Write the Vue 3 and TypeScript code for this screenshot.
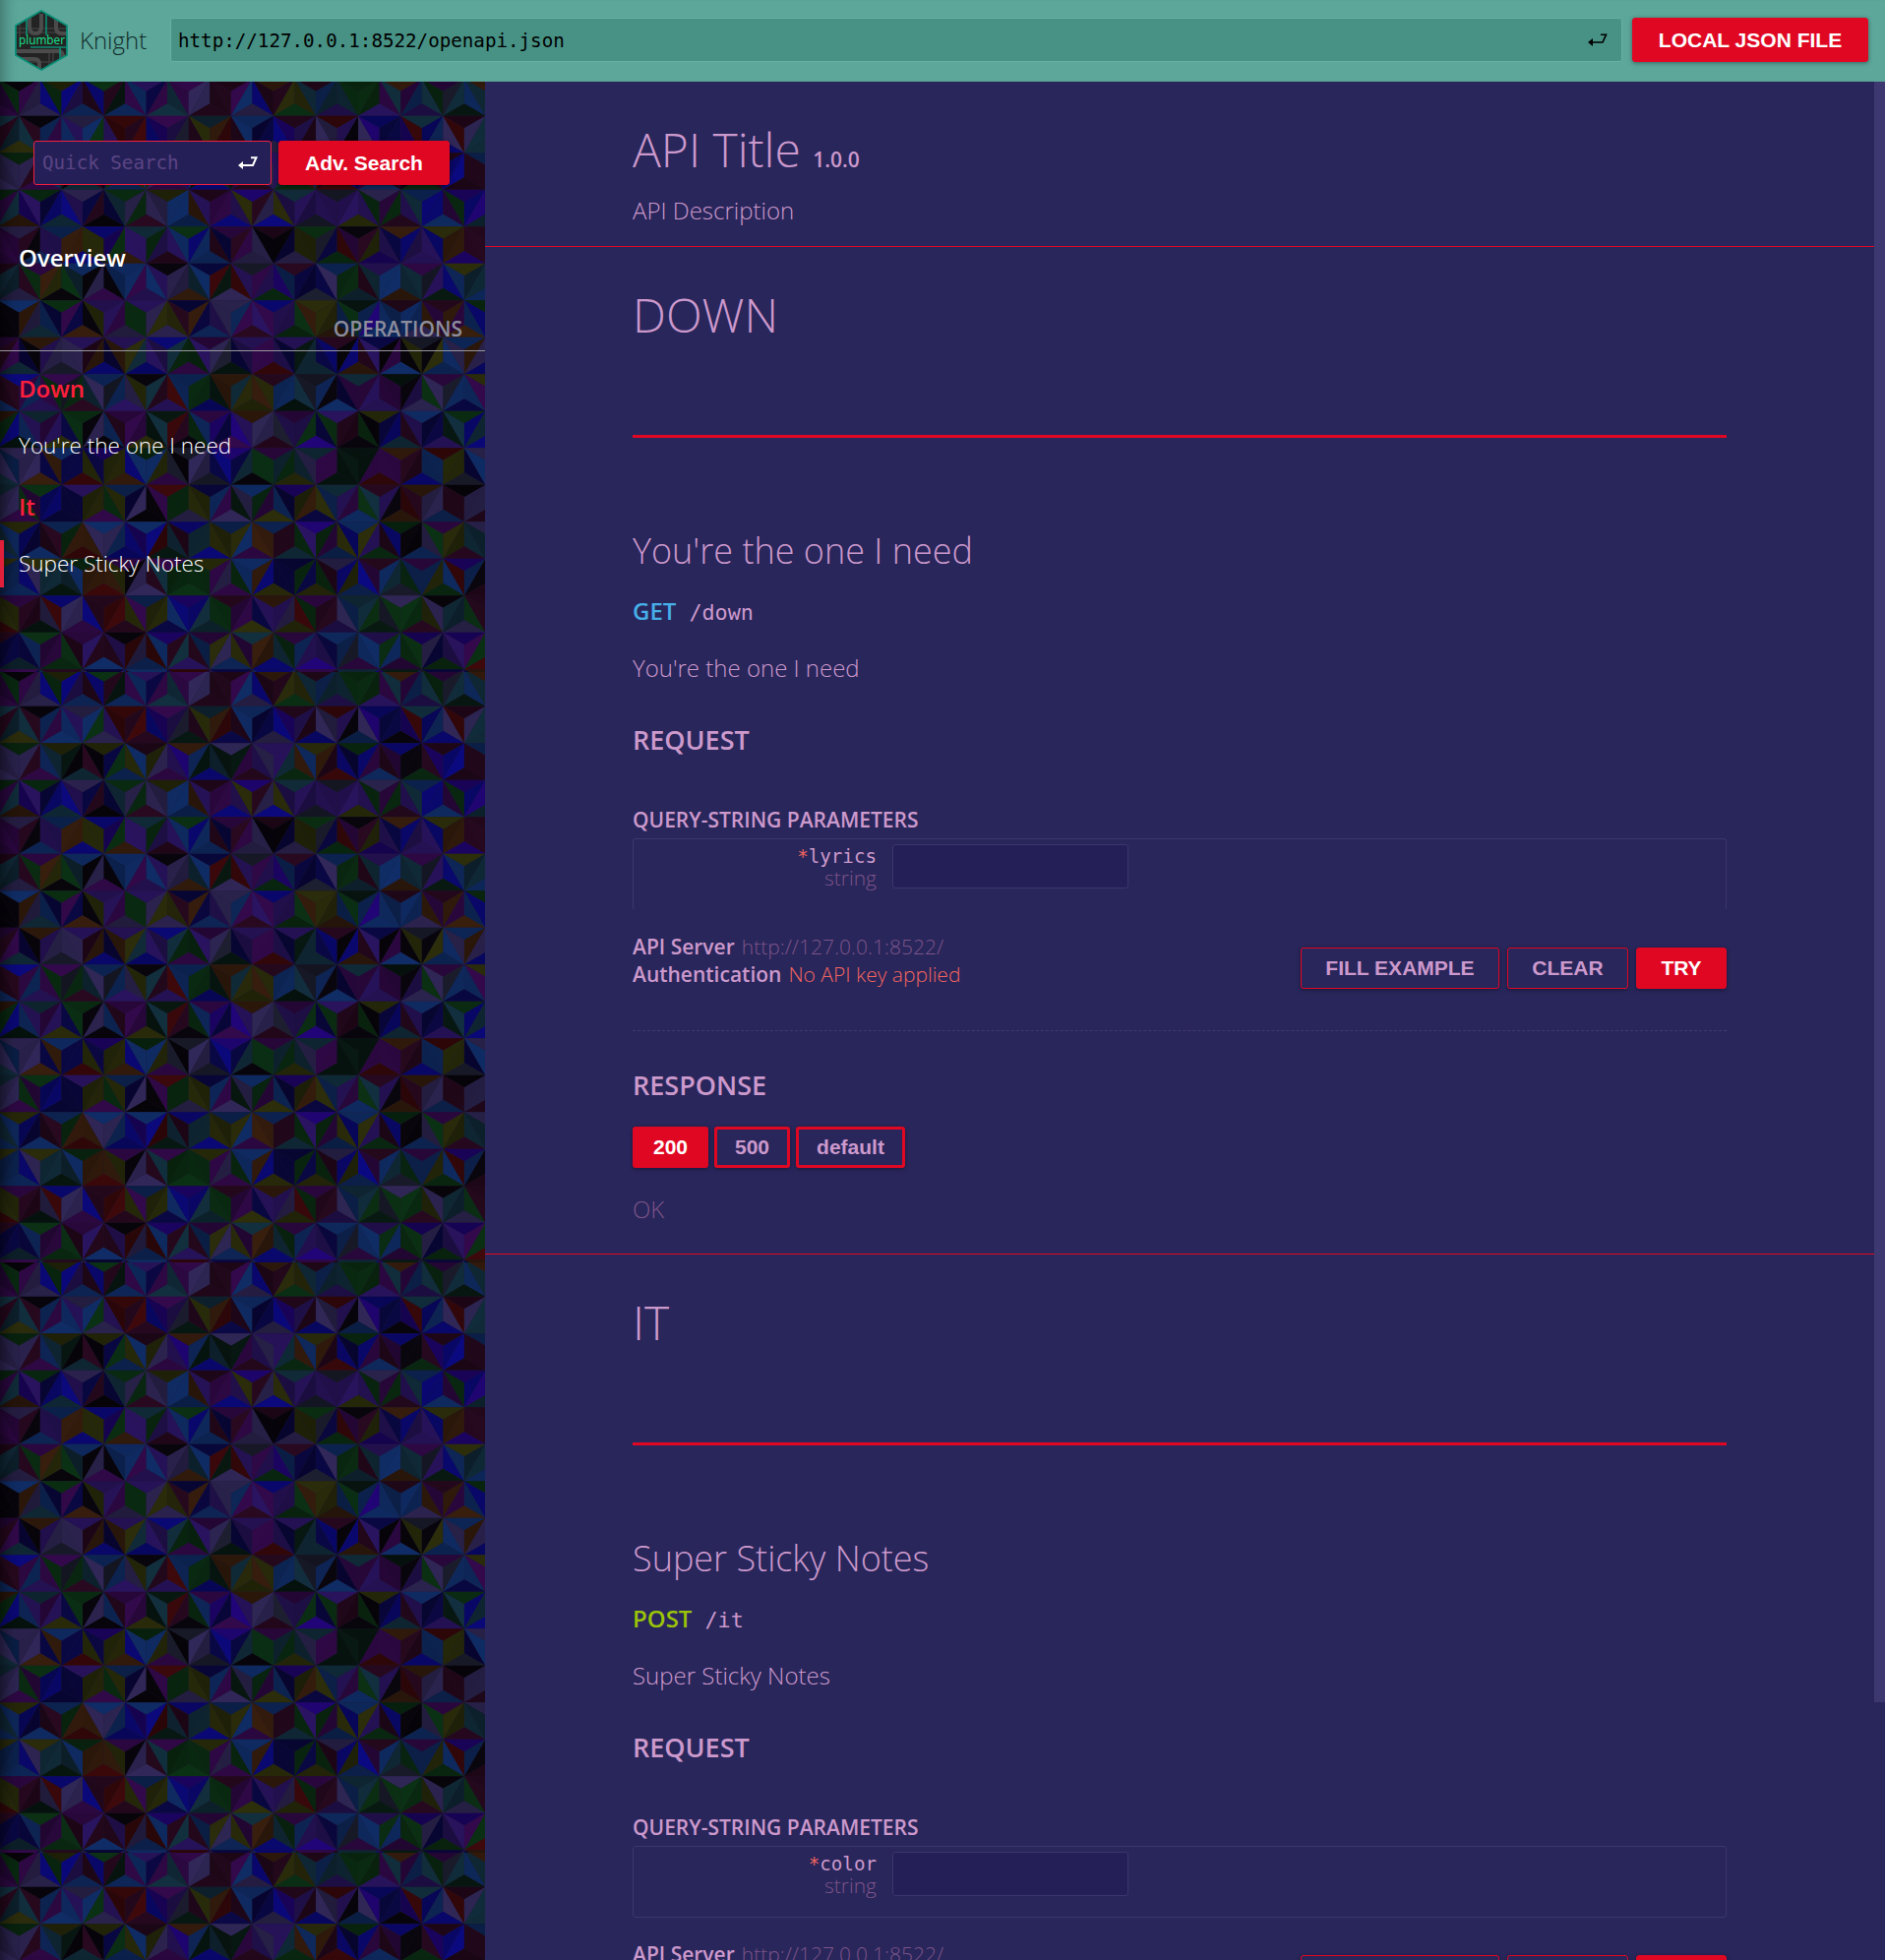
<script setup lang="ts">
interface Operation {
  title: string
  method: string
  path: string
  summary: string
  param: string
  open: boolean
}
interface Group {
  name: string
  operation: Operation
}
interface Facet {
  points: string
  fill: string
}

const groups: Group[] = [
  {
    name: 'Down',
    operation: { title: "You're the one I need", method: 'get', path: '/down', summary: "You're the one I need", param: 'lyrics', open: true },
  },
  {
    name: 'It',
    operation: { title: 'Super Sticky Notes', method: 'post', path: '/it', summary: 'Super Sticky Notes', param: 'color', open: false },
  },
]
const statuses = ['200', '500', 'default']
const activeOperation = 'Super Sticky Notes'

// Faceted triangle wallpaper: every triangle is split in three at its centroid.
type Rgb = [number, number, number]
const palette: Record<string, Rgb> = {
  k: [8, 5, 12], b: [10, 8, 115], n: [9, 7, 62], s: [14, 40, 92], p: [38, 18, 88], v: [30, 4, 108],
  m: [46, 8, 68], w: [36, 8, 28], r: [56, 8, 10], o: [50, 27, 12], y: [40, 42, 10], g: [10, 44, 18],
  d: [7, 22, 16], t: [16, 42, 56], c: [44, 36, 80], e: [26, 28, 44],
}
const facetRows: string[] = [
  'mmm kgm cbc ygb pws gbw dms psn mtt mmc cww wwm sbc oww yyg wts ttp ggg gmp otm stp mge tsd oty',
  'ttw tty kws mss cps gpc rrw rbw mvp ewd tyo rwn ssn nbc wvp wcb rcp kcs bvn nvk trb scb wrc tst',
  'ccc gcc wsm ytd kwt ykn gys wsy cpm ovs dtb cdd mpw pcp tog yso wbr gnb mws bmk kwg wvb bww sws',
  'gvm tvo gpn bbt cpn wnk gtc gcw ycs sos wpm mpb vyw cyb tpp ppe epp ppy cgm gpw stb bms vgb vtt',
  'mmm cmw kps spo oyb byv gpo tpg ppw gsb sws mnw mcc wkk nyc gye nrg kmw ypv onb ppp ybo owv wwm',
  'wwt twc mgo ygk stk ckm sss msp kpc cto nsr drc epm pvg wsn nne scg gwt pts sto mte pbd yst tts',
  'kkk sko cst gnm nko pyp mgc pgc yyc nwo nps ccs mpw bmp pgg yoy yso dgs vss wss soc wmo mso gby',
  'mpw mnt okp cce pcw onb poy tpb bpt ggm mpc end ppm mpr pnd tnt wbk bwo npk mks eyk yss sco cob',
  'bws bwm smp mge gtw sce scp kyt wrp ssg gdb oot yoy wys std ees kns tmm pmp dmk pgc mce ssn ymn',
  'oog bsd tpm pny ggk csk mwm mdy dtr wgk msv nvm opc cew mpp gnv pgw wgk ykn bwt spn ndp gtb tgb',
  'cct csc cno son nyr vny ybo gss yem ekc cne vbn tgk mgt gty tcm mdd ddd mmr omw wsb rsy yne css',
  'tgc cgm gmb bnn pny ygm syn ckk rmg gyc nys mdc scg msy vny oyn tsp mgs wtp kro owc cws kwc cww',
  'bts ysb nws swg oor scc sbb svb rtd bwt tyb syy som sow wgt vpg mys sby pwg gbk kcs mgy ytw ctt',
  'yts sbs yct ttd gso oor myk cwc mtg ggg ygm cgm sso bny nng ngy cwb ybs wms tge mss ysg vrs kkw',
  'wyr myw wcd brc cbm wwr ryw smy ysn vbb tgt wgm mny opp cry mgw wcp tst ged cgg gyw kct tgc www',
  'wnn nnt gsm mgg mwp wws kpr crs vsw twp msy cys tmo otb mgs ppv sns esm psg sgm vgc npg vpm ggr',
  'owg mpb gsn wte swv ncp tbn sws bgp rvm mck npw sod bst spv mgw wky tsb mmo dvs wcn ngm snk onb',
]

const shade = (rgb: Rgb, seed: number): string => {
  const noise = Math.abs(Math.sin(seed * 12.9898) * 43758.5453) % 1
  const gain = 0.72 + noise * 0.4
  return `rgb(${rgb.map((v) => Math.round(v * gain)).join(',')})`
}

const rowPitch = 37.5
const colPitch = 43.1
const facets: Facet[] = facetRows.flatMap((line, row) => {
  const top = row * rowPitch - 2.8
  const bottom = top + rowPitch
  return line.split(' ').flatMap((cell, i) => {
    const cx = -2.2 + (i * colPitch) / 2
    const left = cx - colPitch / 2
    const right = cx + colPitch / 2
    const up = (row + i) % 2 === 0
    const apex = `${cx},${up ? top : bottom}`
    const a = `${left},${up ? bottom : top}`
    const b = `${right},${up ? bottom : top}`
    const centre = `${cx},${up ? top + rowPitch * 0.667 : top + rowPitch * 0.333}`
    const shapes = up ? [[a, apex], [apex, b], [a, b]] : [[a, b], [a, apex], [apex, b]]
    return shapes.map((pair, n) => ({
      points: [...pair, centre].join(' '),
      fill: shade(palette[cell[n]], row * 97 + i * 3 + n + 1),
    }))
  })
})
</script>

<template>
  <div class="page">
    <header class="topbar">
      <svg class="logo" width="54" height="62" viewBox="0 0 54 62">
        <defs>
          <clipPath id="hex"><path d="M27 1 53 16V46L27 61 1 46V16Z" /></clipPath>
        </defs>
        <path d="M27 1 53 16V46L27 61 1 46V16Z" fill="#232323" />
        <g clip-path="url(#hex)" fill="none">
          <path d="M0 19H54M0 23H54M5 10V28M35 40V60M39 40V60M0 53H54" stroke="#3c3c3c" stroke-width="1.6" />
          <path d="M15 6V17Q15 24 21 24Q27 24 27 17V4M42 6V18Q42 24 48 24H54M2 42H44Q49 42 49 48V52M3 50H20Q25 50 25 55V62" stroke="#4b4b4b" stroke-width="4" />
          <path d="M12 9V26M32 4V26M16 38H53M46 38V51" stroke="#0c8c73" stroke-width="1.6" />
        </g>
        <path d="M27 1 53 16V46L27 61 1 46V16Z" fill="none" stroke="#078d75" stroke-width="1.8" />
        <text x="4" y="35" textLength="47" lengthAdjust="spacingAndGlyphs" class="logo-text">plumber</text>
      </svg>
      <span class="brand">Knight</span>
      <div class="url-box">
        <span>http://127.0.0.1:8522/openapi.json</span>
        <svg class="enter" width="20" height="14" viewBox="0 0 20 14">
          <path d="M13 1.2H18.5L15 9H3" fill="none" stroke="currentColor" stroke-width="1.6" />
          <path d="M0 9 5 5V13Z" fill="currentColor" />
        </svg>
      </div>
      <button class="btn solid local">LOCAL JSON FILE</button>
    </header>

    <div class="body">
      <aside class="sidebar">
        <svg class="wallpaper" width="493" height="1909">
          <defs>
            <pattern id="facets" width="600" height="600" patternUnits="userSpaceOnUse">
              <polygon v-for="(f, n) in facets" :key="n" :points="f.points" :fill="f.fill" />
            </pattern>
          </defs>
          <rect width="493" height="1909" fill="#191230" />
          <rect width="493" height="1909" fill="url(#facets)" />
        </svg>
        <nav class="nav">
          <div class="search">
            <div class="search-box">
              <span>Quick Search</span>
              <svg class="enter" width="20" height="14" viewBox="0 0 20 14">
                <path d="M13 1.2H18.5L15 9H3" fill="none" stroke="currentColor" stroke-width="2" />
                <path d="M0 9 5 5V13Z" fill="currentColor" />
              </svg>
            </div>
            <button class="btn solid adv">Adv. Search</button>
          </div>
          <div class="nav-overview">Overview</div>
          <div class="nav-section">OPERATIONS</div>
          <template v-for="g in groups" :key="g.name">
            <div class="nav-tag">{{ g.name }}</div>
            <div class="nav-item" :class="{ active: g.operation.title === activeOperation }">{{ g.operation.title }}</div>
          </template>
        </nav>
      </aside>

      <main class="content">
        <section class="block intro">
          <h1 class="title">API Title <small>1.0.0</small></h1>
          <p class="text">API Description</p>
        </section>
        <section v-for="g in groups" :key="g.name" class="block">
          <h1 class="title tag">{{ g.name }}</h1>
          <div class="rule"></div>
          <h2 class="op-title">{{ g.operation.title }}</h2>
          <div class="endpoint">
            <span class="method" :class="g.operation.method">{{ g.operation.method }}</span>
            <span class="path">{{ g.operation.path }}</span>
          </div>
          <p class="text summary">{{ g.operation.summary }}</p>
          <h3 class="heading">REQUEST</h3>
          <h4 class="subheading">QUERY-STRING PARAMETERS</h4>
          <div class="params" :class="{ open: g.operation.open }">
            <div class="param-label">
              <div class="param-name"><span class="star">*</span>{{ g.operation.param }}</div>
              <div class="param-type">string</div>
            </div>
            <div class="param-input"></div>
          </div>
          <div class="actions">
            <div class="server">
              <div><b>API Server</b><span class="dim">http://127.0.0.1:8522/</span></div>
              <div><b>Authentication</b><span class="warn">No API key applied</span></div>
            </div>
            <button class="btn outline fill">FILL EXAMPLE</button>
            <button class="btn outline clear">CLEAR</button>
            <button class="btn solid try">TRY</button>
          </div>
          <div class="dashes"></div>
          <h3 class="heading response">RESPONSE</h3>
          <div class="tabs">
            <button v-for="(s, n) in statuses" :key="s" class="btn tab" :class="{ solid: n === 0, wide: n === 2 }">{{ s }}</button>
          </div>
          <p class="text ok">OK</p>
        </section>
      </main>
      <div class="scrollbar"><div class="thumb"></div></div>
    </div>
  </div>
</template>

<style>
body {
  margin: 0;
  overflow: hidden;
}
</style>

<style scoped>
* {
  box-sizing: border-box;
}
.page {
  width: 1916px;
  height: 1992px;
  overflow: hidden;
  display: flex;
  flex-direction: column;
  background: #29265b;
  color: #cc99cc;
  font-family: "Open Sans", sans-serif;
  font-weight: 300;
}
.topbar {
  height: 83px;
  flex: none;
  display: flex;
  align-items: center;
  padding: 0 17px 2px 15px;
  background: #5ca69a;
  box-shadow: inset 16px 0 14px -12px rgba(0, 0, 0, 0.3);
}
.logo {
  flex: none;
  display: block;
  overflow: visible;
}
.logo-text {
  font: 400 13px "Open Sans", sans-serif;
  fill: #18e08c;
}
.brand {
  width: 92px;
  margin-left: 12px;
  font-size: 24px;
  line-height: 32px;
  color: #102b29;
}
.url-box {
  flex: 1;
  height: 45px;
  margin: 0 10px 0 0;
  padding: 1px 14px 0 7px;
  display: flex;
  align-items: center;
  justify-content: space-between;
  border: 1px solid #64b1a5;
  border-radius: 3px;
  background: #479285;
  color: #000;
  font: 19.2px "DejaVu Sans Mono", monospace;
}
.enter {
  display: block;
}
.btn {
  margin: 0;
  padding: 0;
  flex: none;
  border: 1px solid #e00723;
  border-radius: 3px;
  background: transparent;
  color: #cc99cc;
  font: bold 21px "Liberation Sans", sans-serif;
  box-shadow: 0 1px 4px rgba(0, 0, 0, 0.4);
}
.btn.solid {
  background: #e00723;
  color: #fff;
}
.local {
  width: 240px;
  height: 45px;
}
.body {
  flex: 1;
  min-height: 0;
  display: flex;
}
.sidebar {
  width: 493px;
  flex: none;
  display: grid;
  overflow: hidden;
}
.wallpaper,
.nav {
  grid-area: 1 / 1;
}
.wallpaper {
  display: block;
}
.nav {
  z-index: 1;
  color: #fff;
  font-size: 22.5px;
  line-height: 32px;
  box-shadow: inset 16px 0 14px -12px rgba(0, 0, 0, 0.5);
}
.search {
  display: flex;
  gap: 7px;
  padding: 60px 0 0 34px;
}
.search-box {
  width: 242px;
  height: 45px;
  padding: 0 13px 0 8px;
  display: flex;
  align-items: center;
  justify-content: space-between;
  border: 1px solid #f0203f;
  border-radius: 3px;
  background: #242057;
  font: 19.2px "DejaVu Sans Mono", monospace;
}
.search-box span {
  color: #5c4484;
}
.search-box .enter {
  color: #fff;
}
.adv {
  width: 174px;
  height: 45px;
}
.nav-overview {
  margin-top: 58px;
  padding-left: 19px;
  font-size: 24px;
  font-weight: 600;
}
.nav-section {
  margin-top: 41px;
  height: 38px;
  padding-right: 23px;
  border-bottom: 1px solid #97979f;
  color: #8d8d9d;
  font-size: 21px;
  line-height: 31px;
  font-weight: 600;
  text-align: right;
}
.nav-tag {
  margin-top: 22px;
  padding-left: 19px;
  color: #ff1f3d;
  font-size: 24px;
  font-weight: 600;
}
.nav-item {
  height: 48px;
  margin-top: 18px;
  padding: 8px 0 0 15px;
  border-left: 4px solid transparent;
}
.nav-item.active {
  border-left-color: #e0203b;
}
.content {
  flex: 1;
  min-width: 0;
  overflow: hidden;
}
.block {
  padding: 37px 150px 29px;
  border-bottom: 1px solid #e00723;
}
.intro {
  padding-bottom: 20px;
}
h1, h2, h3, h4, p {
  margin: 0;
}
.title {
  font-size: 48px;
  line-height: 64px;
  font-weight: 300;
}
.title small {
  font-size: 21px;
  line-height: 0;
  font-weight: 600;
}
.tag {
  text-transform: uppercase;
}
.text {
  font-size: 24px;
  line-height: 32px;
}
.intro .text {
  margin-top: 14px;
}
.rule {
  height: 3px;
  margin-top: 90px;
  background: #e00723;
}
.op-title {
  margin-top: 91px;
  font-size: 36px;
  line-height: 48px;
  font-weight: 300;
}
.endpoint {
  height: 32px;
  margin-top: 21px;
  display: flex;
  gap: 13px;
  line-height: 32px;
}
.method {
  font-size: 24px;
  font-weight: 600;
  text-transform: uppercase;
}
.get {
  color: #47afe8;
}
.post {
  color: #9bc408;
}
.path {
  font: 21.8px/36px "DejaVu Sans Mono", monospace;
}
.summary {
  margin-top: 26px;
}
.heading {
  margin-top: 39px;
  font-size: 27px;
  line-height: 36px;
  font-weight: 600;
}
.subheading {
  margin-top: 49px;
  font-size: 21px;
  line-height: 28px;
  font-weight: 600;
}
.params {
  height: 73px;
  margin-top: 5px;
  padding: 5px 0 0;
  display: flex;
  gap: 16px;
  border: 1px solid #3b376d;
  border-radius: 3px;
}
.params.open {
  border-bottom-color: transparent;
}
.param-label {
  width: 247px;
  text-align: right;
}
.param-name {
  height: 23px;
  font: 19.2px/26px "DejaVu Sans Mono", monospace;
}
.star,
.warn {
  color: #f06560;
}
.param-type {
  font-size: 21px;
  line-height: 22px;
  color: #7d5489;
}
.param-input {
  width: 240px;
  height: 45px;
  border: 1px solid #3b376d;
  border-radius: 3px;
  background: #242057;
}
.actions {
  margin-top: 23px;
  height: 56px;
  display: flex;
  align-items: flex-start;
  gap: 8px;
}
.server {
  flex: 1;
  font-size: 21px;
  line-height: 28px;
}
.server b {
  margin-right: 7px;
  font-weight: 600;
}
.dim,
.ok {
  color: #7d5489;
}
.actions .btn {
  height: 42px;
  margin-top: 15px;
}
.fill {
  width: 202px;
}
.clear {
  width: 123px;
}
.try {
  width: 92px;
}
.dashes {
  margin-top: 43px;
  border-top: 1px dashed #3f3b70;
}
.response {
  margin-top: 37px;
}
.tabs {
  margin-top: 24px;
  display: flex;
  gap: 6px;
}
.btn.tab {
  width: 77px;
  height: 42px;
  border-width: 3px;
}
.btn.tab.wide {
  width: 111px;
}
.ok {
  margin-top: 26px;
}
.scrollbar {
  width: 11px;
  flex: none;
}
.thumb {
  height: 1647px;
  background: #3d3970;
}
</style>
